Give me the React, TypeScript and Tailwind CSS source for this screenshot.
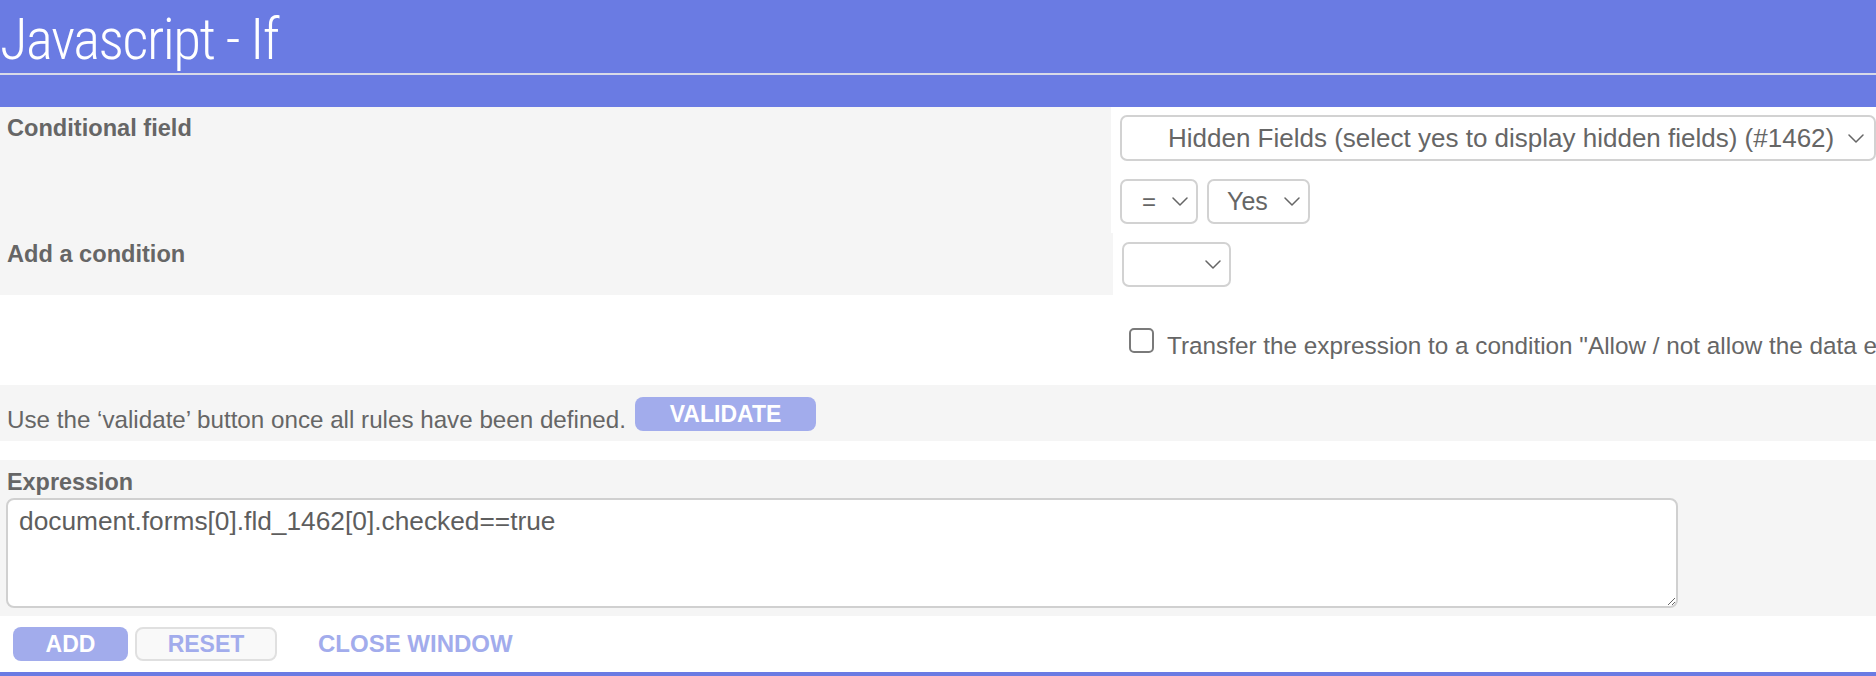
import React from 'react';

// Condition editor popup: blue title band, gray form rows, action buttons.

const Chevron: React.FC = () => (
    <svg width="16" height="9" viewBox="0 0 16 9" fill="none" className="shrink-0">
        <path d="M1 1 L8 8 L15 1" stroke="#666" strokeWidth="1.5" strokeLinecap="round" strokeLinejoin="round" />
    </svg>
);

const FakeSelect: React.FC<{ className: string; label?: string; labelClass?: string }> = ({ className, label, labelClass }) => (
    <div className={`flex items-center justify-between bg-white border-2 border-[#d2d2d2] rounded-[7px] ${className}`}>
        <span className={labelClass}>{label}</span>
        <Chevron />
    </div>
);

export default function App() {
    return (
        <div className="w-[1876px] h-[676px] overflow-hidden bg-white font-['Liberation_Sans',Arial,sans-serif] text-[#666]">
            {/* Title band */}
            <header className="bg-[#6a7be3] h-[107px]">
                <div className="h-[75px] border-b-2 border-[#d8dae8] pt-[8px]">
                    <h1 className="text-[57px] leading-[64px] font-light text-white font-['Roboto_Condensed','Liberation_Sans_Narrow','DejaVu_Sans_Condensed',sans-serif] tracking-[-1.5px]">
                        Javascript - If
                    </h1>
                </div>
            </header>

            {/* Conditional field */}
            <div className="flex h-[126px]">
                <div className="w-[1113px] bg-[#f5f5f5] pt-[8px] pl-[7px]">
                    <p className="text-[23.6px] leading-[27px] font-bold">Conditional field</p>
                </div>
                <div className="flex-1 pt-[8px] pl-[9px] flex flex-col gap-[18px]">
                    <FakeSelect
                        className="w-[756px] h-[46px] pl-[46px] pr-[10px]"
                        label="Hidden Fields (select yes to display hidden fields) (#1462)"
                        labelClass="text-[26px] leading-none whitespace-nowrap"
                    />
                    <div className="flex gap-[9px]">
                        <FakeSelect className="w-[78px] h-[45px] pl-[20px] pr-[8px]" label="=" labelClass="text-[24px] leading-none" />
                        <FakeSelect className="w-[103px] h-[45px] pl-[18px] pr-[8px]" label="Yes" labelClass="text-[25px] leading-none" />
                    </div>
                </div>
            </div>

            {/* Add a condition */}
            <div className="flex h-[62px]">
                <div className="w-[1113px] bg-[#f5f5f5] pt-[8px] pl-[7px]">
                    <p className="text-[23.6px] leading-[27px] font-bold">Add a condition</p>
                </div>
                <div className="flex-1 pt-[9px] pl-[9px]">
                    <FakeSelect className="w-[109px] h-[45px] pl-[18px] pr-[8px]" />
                </div>
            </div>

            {/* Transfer checkbox */}
            <div className="h-[90px] flex pl-[1129px] pt-[33px] gap-[13px]">
                <div className="w-[25px] h-[25px] shrink-0 rounded-[5px] border-2 border-[#7a7a7a] bg-white" />
                <p className="mt-[4px] text-[24.3px] leading-[28px] whitespace-nowrap">
                    Transfer the expression to a condition "Allow / not allow the data entry"
                </p>
            </div>

            {/* Validate */}
            <div className="h-[56px] bg-[#f5f5f5] flex items-start pl-[7px]">
                <p className="mt-[21px] text-[24.2px] leading-[28px] whitespace-nowrap">
                    Use the ‘validate’ button once all rules have been defined.
                </p>
                <button className="ml-[9px] mt-[12px] w-[181px] h-[34px] rounded-[8px] bg-[#a2acec] text-white text-[23px] font-bold leading-none">
                    VALIDATE
                </button>
            </div>

            <div className="h-[19px]" />

            {/* Expression */}
            <div className="h-[156px] bg-[#f5f5f5] pt-[9px] pl-[6px]">
                <p className="pl-[1px] text-[23.4px] leading-[27px] font-bold">Expression</p>
                <textarea
                    className="mt-[2px] block w-[1672px] h-[110px] bg-white border-2 border-[#d0d0d0] rounded-[8px] pl-[11px] pt-[6px] text-[26.3px] leading-[30px] text-[#5e5e5e] outline-none"
                    defaultValue="document.forms[0].fld_1462[0].checked==true"
                />
            </div>

            {/* Actions */}
            <div className="h-[56px] flex items-start pt-[11px] pl-[13px]">
                <button className="w-[115px] h-[34px] rounded-[8px] bg-[#a2acec] text-white text-[23px] font-bold leading-none">
                    ADD
                </button>
                <button className="ml-[7px] w-[142px] h-[34px] rounded-[8px] bg-[#f9f9f9] border-2 border-[#e0e0e0] text-[#a2acec] text-[23px] font-bold leading-none">
                    RESET
                </button>
                <span className="ml-[41px] h-[34px] flex items-center text-[24px] font-bold text-[#a2acec]">CLOSE WINDOW</span>
            </div>

            <div className="h-[4px] bg-[#6a7be3]" />
        </div>
    );
}
